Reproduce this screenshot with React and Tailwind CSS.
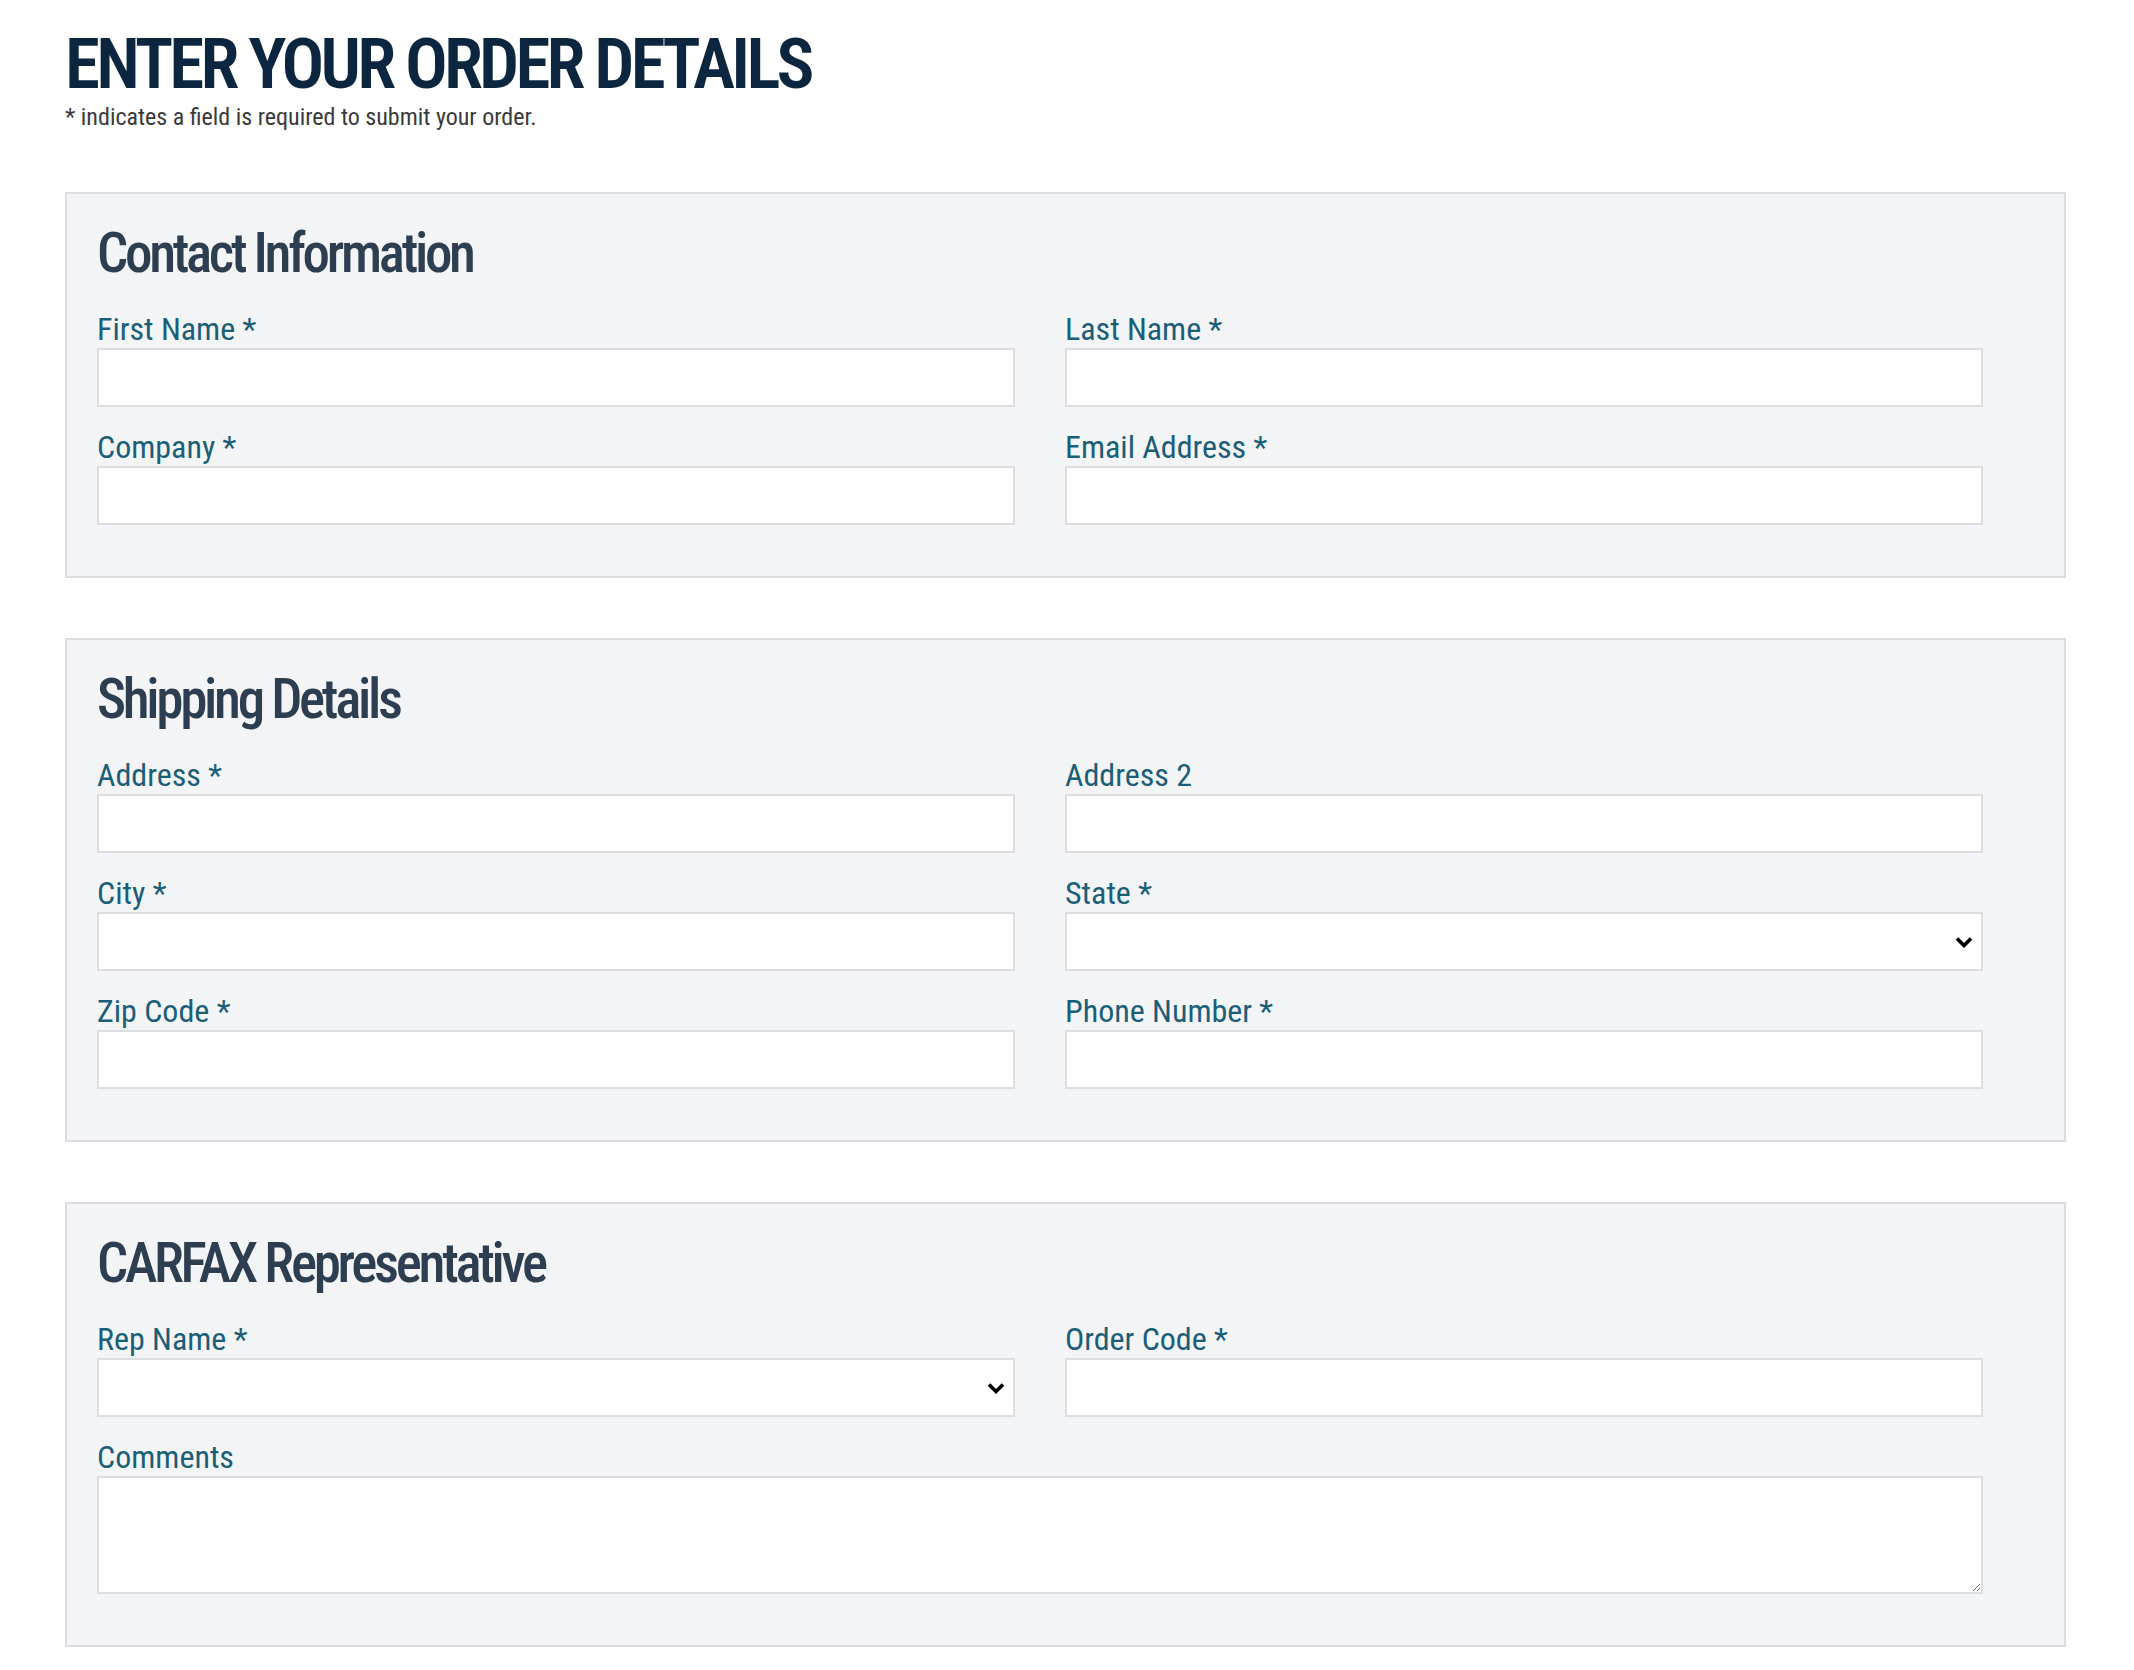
import { useState } from "react";

const sections = [
  {
    title: "Contact Information",
    fields: [
      { label: "First Name *", type: "text" },
      { label: "Last Name *", type: "text" },
      { label: "Company *", type: "text" },
      { label: "Email Address *", type: "text" },
    ],
  },
  {
    title: "Shipping Details",
    fields: [
      { label: "Address *", type: "text" },
      { label: "Address 2", type: "text" },
      { label: "City *", type: "text" },
      { label: "State *", type: "select" },
      { label: "Zip Code *", type: "text" },
      { label: "Phone Number *", type: "text" },
    ],
  },
  {
    title: "CARFAX Representative",
    fields: [
      { label: "Rep Name *", type: "select" },
      { label: "Order Code *", type: "text" },
      { label: "Comments", type: "textarea" },
    ],
  },
];

function Chevron() {
  return (
    <svg
      viewBox="0 0 18 12"
      className="pointer-events-none absolute right-[10px] top-1/2 h-[12px] w-[18px] -translate-y-1/2"
    >
      <path d="M2 2.5 L9 9.5 L16 2.5" fill="none" stroke="black" strokeWidth="3.6" />
    </svg>
  );
}

function Field({ field, value, onChange }) {
  const inputClass =
    "block w-full border-2 border-[#dcdde0] bg-white px-3 text-[28px] text-gray-800 focus:outline-none";

  return (
    <div className={field.type === "textarea" ? "col-span-2" : ""}>
      <label className="block text-[32px] leading-none text-[#1b5e78]">
        {field.label}
      </label>
      <div className="relative mt-[3px]">
        {field.type === "select" && (
          <>
            <select
              value={value}
              onChange={onChange}
              className={inputClass + " h-[59px] appearance-none"}
            >
              <option value=""></option>
            </select>
            <Chevron />
          </>
        )}
        {field.type === "text" && (
          <input
            type="text"
            value={value}
            onChange={onChange}
            className={inputClass + " h-[59px]"}
          />
        )}
        {field.type === "textarea" && (
          <textarea
            value={value}
            onChange={onChange}
            className={inputClass + " h-[118px] resize-y py-2"}
          />
        )}
      </div>
    </div>
  );
}

export default function App() {
  const [values, setValues] = useState({});

  const update = (key) => (e) =>
    setValues({ ...values, [key]: e.target.value });

  return (
    <div className="min-h-screen bg-white pl-[65px] pr-[68px] pt-[28px] pb-[24px] font-['Roboto',sans-serif] font-stretch-condensed">
      <h1 className="text-[71px] font-semibold leading-[72px] tracking-[-3.8px] text-[#0d2640]">
        ENTER YOUR ORDER DETAILS
      </h1>
      <p className="mt-[5px] text-[24px] leading-none text-[#3a3a3a]">
        * indicates a field is required to submit your order.
      </p>

      <div className="mt-[63px] flex flex-col gap-[60px]">
        {sections.map((section) => (
          <section
            key={section.title}
            className="border-2 border-[#dcdde0] bg-[#f3f4f6] px-[30px] pt-[32px] pb-[51px]"
          >
            <h2 className="text-[55px] font-medium leading-none tracking-[-3.3px] text-[#2d3e50]">
              {section.title}
            </h2>
            <div className="mt-[32px] grid max-w-[1886px] grid-cols-2 gap-x-[50px] gap-y-[24px]">
              {section.fields.map((field) => (
                <Field
                  key={field.label}
                  field={field}
                  value={values[field.label] || ""}
                  onChange={update(field.label)}
                />
              ))}
            </div>
          </section>
        ))}
      </div>
    </div>
  );
}
